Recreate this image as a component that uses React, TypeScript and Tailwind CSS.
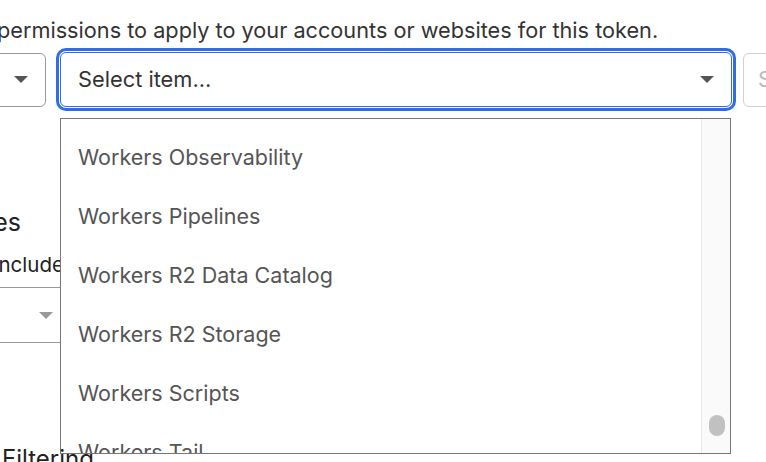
import React from 'react';

const items = [
  'Workers Observability',
  'Workers Pipelines',
  'Workers R2 Data Catalog',
  'Workers R2 Storage',
  'Workers Scripts',
  'Workers Tail',
];

function Caret({ className = 'fill-[#555]' }: { className?: string }) {
  return (
    <svg width="14" height="7" viewBox="0 0 14 7" className={className}>
      <polygon points="0,0 14,0 7,7" />
    </svg>
  );
}

export default function App() {
  return (
    <div className="relative h-[462px] w-[766px] overflow-hidden bg-white font-['Inter','Liberation_Sans',sans-serif]">
      {/* description line */}
      <p className="ml-[-3px] whitespace-nowrap pt-[16px] text-[21.7px] leading-[28px] text-[#333]">
        permissions to apply to your accounts or websites for this token.
      </p>

      {/* select row */}
      <div className="mt-[8px] flex h-[55px] items-center">
        <div className="ml-[-154px] flex h-[54px] w-[200px] shrink-0 items-center justify-end rounded-[6px] border border-[#999] pr-[17px]">
          <Caret />
        </div>
        <div className="ml-[14px] flex h-[55px] w-[672px] shrink-0 items-center justify-between rounded-[6px] border border-[#2f6ce8] pl-[17px] pr-[17px] outline-3 outline-offset-1 outline-[#2f6ce8]">
          <span className="text-[21.8px] text-[#333]">Select item...</span>
          <Caret />
        </div>
        <div className="ml-[11px] flex h-[54px] w-[200px] shrink-0 items-center rounded-[6px] border border-[#d0d0d0] pl-[14px]">
          <span className="text-[21.8px] text-[#bbb]">Select...</span>
        </div>
      </div>

      {/* lower left form column */}
      <div className="mt-[100px] flex w-[21px] justify-end">
        <h3 className="whitespace-nowrap text-[25px] leading-[30px] text-[#222]">Zone Resources</h3>
      </div>
      <p className="ml-[-7px] mt-[15px] whitespace-nowrap text-[20.5px] leading-[26px] text-[#222]">Include</p>
      <div className="ml-[-200px] mt-[9px] flex h-[56px] w-[270px] items-center justify-end border-y border-[#999] pr-[17px]">
        <Caret className="fill-[#999]" />
      </div>
      <p className="relative z-10 ml-[2px] mt-[102px] text-[24px] leading-[28px] text-[#222]">Filtering</p>

      {/* open dropdown menu */}
      <div className="absolute left-[60px] top-[118px] flex h-[336px] w-[671px] border border-[#777] bg-white">
        <ul className="flex-1 overflow-hidden pt-[9px]">
          {items.map((item) => (
            <li key={item} className="flex h-[59px] items-center pl-[17px] text-[21.5px] text-[#555]">
              {item}
            </li>
          ))}
        </ul>
        <div className="relative w-[29px] border-l border-[#e6e6e6] bg-[#fafafa]">
          <div className="absolute left-[7px] top-[296px] h-[21px] w-[16px] rounded-full bg-[#c1c1c1]" />
        </div>
      </div>
    </div>
  );
}
